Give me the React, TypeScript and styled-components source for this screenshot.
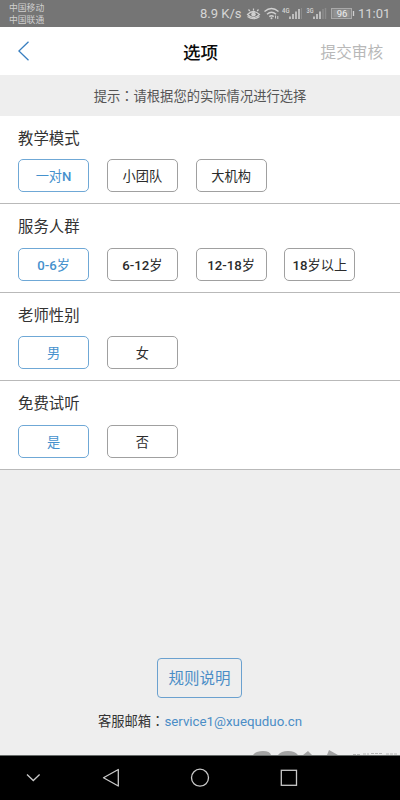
import React, { useState } from "react";
import styled, { createGlobalStyle } from "styled-components";

const GlobalStyle = createGlobalStyle`
  * { box-sizing: border-box; }
  body { margin: 0; font-family: Roboto, "Noto Sans CJK SC", sans-serif; }
`;

const Screen = styled.div`
  width: 400px;
  height: 800px;
  display: flex;
  flex-direction: column;
  background: #eeeeee;
  overflow: hidden;
`;

const StatusBar = styled.div`
  height: 27px;
  flex: none;
  display: flex;
  justify-content: space-between;
  padding: 0 10px 0 9px;
  background: #757575;
  color: #d6d6d6;
`;

const Carriers = styled.div`
  padding-top: 2px;
  font-size: 8.8px;
  line-height: 12px;
  color: #cfcfcf;
`;

const StatusItems = styled.div`
  display: flex;
  align-items: center;
  height: 28px;
`;

const StatusText = styled.span<{ $width: number }>`
  width: ${(p) => p.$width}px;
  font-size: 13px;
  line-height: 16px;
  white-space: nowrap;
`;

const StatusIcons = styled.svg`
  display: block;
  flex: none;
`;

const Header = styled.header`
  height: 48px;
  flex: none;
  display: grid;
  grid-template-columns: 1fr auto 1fr;
  align-items: center;
  padding: 0 17px 0 18px;
  background: #ffffff;
`;

const BackButton = styled.button`
  padding: 0;
  border: 0;
  background: none;
  display: flex;
  justify-self: start;
`;

const Title = styled.h1`
  margin: 3px 0 0;
  font-size: 17.5px;
  line-height: 26px;
  font-weight: 500;
  color: #0a0a0a;
`;

const Submit = styled.span`
  justify-self: end;
  margin-top: 4px;
  font-size: 15.6px;
  line-height: 24px;
  color: #b8b8b8;
`;

const Hint = styled.div`
  height: 41px;
  flex: none;
  text-align: center;
  font-size: 13.3px;
  line-height: 44px;
  color: #555555;
`;

const Colon = styled.span`
  font-family: "Noto Sans CJK TC", sans-serif;
  line-height: 1;
`;

const Section = styled.section<{ $height: number }>`
  height: ${(p) => p.$height}px;
  flex: none;
  display: flex;
  flex-direction: column;
  justify-content: space-between;
  padding: 11px 18px 11px;
  background: #ffffff;
  border-bottom: 1px solid #b9b9b9;
`;

const SectionTitle = styled.h2`
  margin: 0;
  font-size: 15.4px;
  line-height: 24px;
  font-weight: 400;
  color: #333333;
`;

const Options = styled.div`
  display: grid;
  grid-template-columns: repeat(4, 71px);
  column-gap: 17.8px;
`;

const Option = styled.button<{ $selected: boolean }>`
  height: 33px;
  padding: 2px 0 0;
  border: 1px solid ${(p) => (p.$selected ? "#6fa8d6" : "#a0a0a0")};
  border-radius: 5px;
  background: #ffffff;
  color: ${(p) => (p.$selected ? "#4591cd" : "#2b2b2b")};
  font-family: inherit;
  font-size: 13.2px;
  font-weight: 400;
  line-height: 20px;
  white-space: nowrap;
`;

const Latin = styled.span`
  font-weight: 500;
`;

const Footer = styled.footer`
  flex: 1;
  display: flex;
  flex-direction: column;
  align-items: center;
  justify-content: flex-end;
  position: relative;
`;

const RulesButton = styled.button`
  width: 85px;
  height: 40px;
  margin-right: 1px;
  padding: 2px 0 0;
  border: 1px solid #6ba1cf;
  border-radius: 4px;
  background: transparent;
  color: #4a8dc6;
  font-family: inherit;
  font-size: 15.5px;
  line-height: 24px;
`;

const Contact = styled.div`
  margin: 14px 0 23px;
  font-size: 13.3px;
  line-height: 20px;
  color: #333333;
`;

const Email = styled.span`
  color: #4a8dc6;
`;

const Watermark = styled.svg`
  position: absolute;
  right: 0;
  bottom: 0;
`;

const NavBar = styled.nav`
  height: 45px;
  flex: none;
  display: flex;
  background: #000000;
  border-top: 1px solid #666b69;
`;

const NavIcons = styled.svg`
  display: block;
`;

const groups = [
  { title: "教学模式", options: ["一对N", "小团队", "大机构"], height: 88 },
  { title: "服务人群", options: ["0-6岁", "6-12岁", "12-18岁", "18岁以上"], height: 89 },
  { title: "老师性别", options: ["男", "女"], height: 88 },
  { title: "免费试听", options: ["是", "否"], height: 89 },
];

/* Latin letters and digits are set in medium weight, Chinese in regular. */
function MixedLabel({ text }: { text: string }) {
  return (
    <>
      {text.split(/([0-9A-Z-]+)/).map((part, i) =>
        i % 2 === 1 ? <Latin key={i}>{part}</Latin> : part
      )}
    </>
  );
}

function StatusGlyphs() {
  return (
    <StatusIcons width="112" height="28" viewBox="246 0 112 28" fill="none" stroke="#d0d0d0">
      <path d="M247.500 14.500q6-6 12 0q-6 6-12 0Z" strokeWidth="1.200" />
      <circle cx="253.500" cy="14.300" r="2.200" fill="#d0d0d0" stroke="none" />
      <path d="M253.500 8.500v2M248.500 9.500l1.300 1.500M258.500 9.500l-1.300 1.500M247.500 16.500q6 4.500 12 0" strokeWidth="1.200" />
      <path d="M264.500 11.500q7-6 14 0M267 14.200q4.500-4 9 0M269.300 16.600q2.200-1.800 4.400 0" strokeWidth="1.400" />
      <circle cx="271.500" cy="18.300" r="1" fill="#d0d0d0" stroke="none" />
      <path d="M275.500 15.500v3M277.800 16v3" strokeWidth="1" />
      <g fill="#d6d6d6" stroke="none" fontFamily="Roboto" fontSize="7.500" fontWeight="500">
        <text x="282" y="12.500" textLength="7.500" lengthAdjust="spacingAndGlyphs">4G</text>
        <text x="306.500" y="12.500" textLength="7" lengthAdjust="spacingAndGlyphs">3G</text>
      </g>
      <path d="M290 16.500v2.500M293 14v5M296 11.500v7.500M299 9v10" strokeWidth="1.600" />
      <path d="M301.500 8v11" stroke="#8c8c8c" />
      <path d="M314 16.500v2.500M317 14v5M320 11.500v7.500" strokeWidth="1.600" />
      <path d="M323 9v10M325.500 8v11" stroke="#8c8c8c" strokeWidth="1.500" />
      <rect x="331.500" y="8.500" width="20" height="10" fill="#858585" stroke="#a9a9a9" />
      <rect x="333.500" y="10" width="16" height="7" fill="#929292" stroke="none" />
      <path d="M353.500 11v5" strokeWidth="1.300" />
      <text x="342" y="17.200" textAnchor="middle" fill="#eeeeee" stroke="none" fontFamily="Roboto" fontSize="9.500">96</text>
    </StatusIcons>
  );
}

export default function App() {
  const [selected, setSelected] = useState<number[]>(groups.map(() => 0));
  const choose = (group: number, option: number) =>
    setSelected((all) => all.map((value, i) => (i === group ? option : value)));

  return (
    <>
      <GlobalStyle />
      <Screen>
        <StatusBar>
          <Carriers>
            <div>中国移动</div>
            <div>中国联通</div>
          </Carriers>
          <StatusItems>
            <StatusText $width={46}>8.9 K/s</StatusText>
            <StatusGlyphs />
            <StatusText $width={32}>11:01</StatusText>
          </StatusItems>
        </StatusBar>
        <Header>
          <BackButton aria-label="返回">
            <svg width="12" height="20" viewBox="0 0 12 20" fill="none" stroke="#397fc0" strokeWidth="1.3">
              <path d="M10.500 0.800L0.900 10L10.500 19.200" />
            </svg>
          </BackButton>
          <Title>选项</Title>
          <Submit>提交审核</Submit>
        </Header>
        <Hint>提示<Colon>：</Colon>请根据您的实际情况进行选择</Hint>
        {groups.map((group, g) => (
          <Section key={group.title} $height={group.height}>
            <SectionTitle>{group.title}</SectionTitle>
            <Options>
              {group.options.map((label, o) => (
                <Option key={label} $selected={selected[g] === o} onClick={() => choose(g, o)}>
                  <MixedLabel text={label} />
                </Option>
              ))}
            </Options>
          </Section>
        ))}
        <Footer>
          <RulesButton>规则说明</RulesButton>
          <Contact>
            客服邮箱<Colon>：</Colon><Email>service1@xuequduo.cn</Email>
          </Contact>
          <Watermark width="150" height="5" viewBox="250 750 150 5" fill="#a3a3a3">
            <path d="M253 755q3-4 10-4t8 4ZM278 755q3-4 10-4t10 4ZM303 755l5-4 4 4ZM327 755l2-5 9 5Z" />
            <path d="M353 754.500h8M363 754h6M371 753.500h12M386 754h12" stroke="#b5b5b5" strokeDasharray="3 1" />
          </Watermark>
        </Footer>
        <NavBar>
          <NavIcons width="400" height="44" viewBox="0 756 400 44" fill="none" stroke="#c9c9c9" strokeWidth="1.300">
            <path d="M27 774.500l6.300 6 6.300-6" />
            <path d="M118.300 769.500v16.500L103.500 777.700Z" strokeLinejoin="round" />
            <circle cx="200" cy="777.700" r="8.500" />
            <rect x="281.300" y="770.300" width="15.200" height="15" />
          </NavIcons>
        </NavBar>
      </Screen>
    </>
  );
}
